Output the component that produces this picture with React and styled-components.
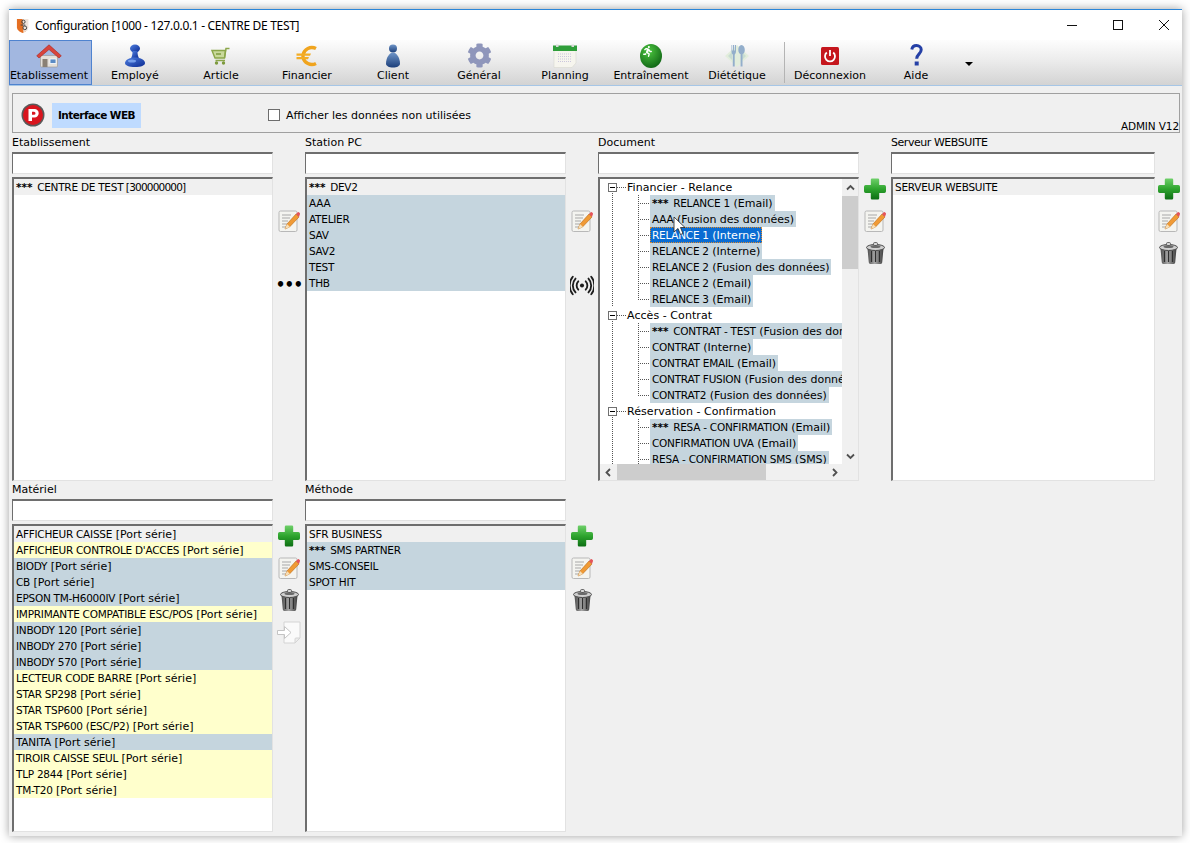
import React from "react";
import styled, { createGlobalStyle } from "styled-components";
import { FaCog, FaRunning } from "react-icons/fa";

const Global = createGlobalStyle`
  html, body { margin: 0; padding: 0; background: #fff; }
  body { font-family: "DejaVu Sans", sans-serif; font-size: 11px; color: #000; }
  * { box-sizing: border-box; }
`;

const Desktop = styled.div`
  width: 1190px; height: 843px; padding: 9px 8px 0 9px; overflow: hidden;
`;
const Window = styled.div`
  width: 1173px; height: 827px; display: flex; flex-direction: column;
  background: #f0f0f0; border-top: 1px solid #2b86d8;
  box-shadow: 0 0 9px rgba(0,0,0,.38);
`;
const TitleBar = styled.div`
  height: 30px; display: flex; align-items: center; background: #fff; padding-left: 7px; flex: none;
`;
const TitleText = styled.span`
  font-family: "Noto Sans", sans-serif; font-size: 12px; margin-left: 6px; letter-spacing: -.32px; flex: 1; white-space: nowrap;
`;
const WinBtn = styled.div`
  width: 46px; height: 30px; display: flex; align-items: center; justify-content: center;
  &:last-child { margin-right: -5px; }
`;
const Toolbar = styled.div`
  height: 46px; flex: none; display: flex; align-items: stretch;
  background: linear-gradient(#fdfdfd, #ececec 45%, #d3d3d3);
  border-bottom: 1px solid #a6c6e6;
`;
const ToolBtn = styled.div`
  width: ${p => p.$active ? 83 : 86}px; height: 45px; flex: none; display: flex; flex-direction: column; align-items: center;
  padding-top: 3px; white-space: nowrap; letter-spacing: .01px;
  ${p => p.$active && "background:#a2b7e0;border:1px solid #4f83cf;padding-top:2px;padding-right:3px;"}
`;
const ToolIcon = styled.div`
  height: 25px; display: flex; align-items: center; justify-content: center; flex: none;
`;
const ToolLabel = styled.div`
  line-height: 14px; margin-top: 1px;
`;
const ToolSep = styled.div`
  width: 1px; height: 41px; margin: 2px 2px 0 4px; background: #b4b4b4; flex: none;
`;
const MoreArrow = styled.div`
  width: 0; height: 0; margin: 22px 0 0 6px; border-left: 4px solid transparent; border-right: 4px solid transparent; border-top: 4px solid #000;
`;
const Main = styled.div`
  flex: 1; padding: 7px 0 0 3px; display: flex; flex-direction: column;
`;
const Panel = styled.div`
  width: 1168px; height: 40px; border: 1px solid #a0a0a0; display: flex; align-items: center; padding: 4px 0 0 8px; flex: none;
`;
const Badge = styled.div`
  width: 89px; height: 25px; margin-left: 7px; background: #bfdbff; font-weight: 700; display: flex; align-items: center; justify-content: center; font-size: 10.5px; letter-spacing: -.55px;
`;
const CheckBox = styled.div`
  width: 12px; height: 12px; margin-left: 127px; background: #fff; border: 1px solid #6d6d6d;
`;
const CheckLabel = styled.span`
  margin-left: 6px;
`;
const Version = styled.span`
  margin-left: auto; align-self: flex-end; font-size: 10.5px; line-height: 12px; letter-spacing: -.12px;
`;
const Section = styled.div`
  display: grid; grid-template-columns: 293px 293px 293px 291px; margin-top: ${p => p.$top}px;
`;
const Col = styled.div`
  display: flex; flex-direction: column;
`;
const Label = styled.div`
  height: 17px; line-height: 16px; letter-spacing: ${p => p.$tight ? "-.45px" : "0"};
`;
const SearchBox = styled.div`
  width: ${p => p.$w || 261}px; height: 22px; background: #fff; margin-bottom: 3px;
  border-style: solid; border-width: 2px 1px 1px 1px; border-color: #6e6e6e #e2e2e2 #e2e2e2 #6e6e6e;
`;
const ListRow = styled.div`
  display: flex; height: ${p => p.$h}px;
`;
const ListBox = styled.div`
  width: ${p => p.$w || 261}px; height: 100%; background: #fff; overflow: hidden; flex: none;
  border-style: solid; border-width: 2px 1px 1px 2px; border-color: #6e6e6e #e2e2e2 #e2e2e2 #6e6e6e;
`;
const Item = styled.div`
  height: 16px; line-height: 16px; padding-left: 2px; white-space: nowrap;
  background: ${p => ({ grey: "#f0f0f0", yellow: "#ffffcc", blue: "#c5d5de" }[p.$tone] || "transparent")};
`;
const Name = styled.span`
  font-size: 10.5px; letter-spacing: -.25px;
`;
const Detail = styled.span`
  font-size: 11px; letter-spacing: 0;
`;
const Code = styled.span`
  font-size: 10.5px; letter-spacing: -.8px;
`;
const Stars = styled.span`
  font-size: 10.5px; font-weight: 700; margin-right: 1px;
`;
const Gutter = styled.div`
  flex: 1; display: flex; flex-direction: column; align-items: center; margin-top: -4px;
`;
const Slot = styled.div`
  height: 32px; display: flex; align-items: center; justify-content: center;
`;
const Dots = styled.span`
  font-size: 15px; letter-spacing: -.8px; line-height: 16px; font-weight: 700;
`;
/* tree */
const TreeTop = styled.div`
  display: flex; height: 285px;
`;
const TreeView = styled.div`
  width: 242px; flex: none; overflow: hidden; position: relative;
`;
const dots = (dir) => `repeating-linear-gradient(${dir}, #555 0 1px, transparent 1px 2px)`;
const GroupRow = styled.div`
  height: 16px; display: flex; align-items: center; padding-left: 8px; white-space: nowrap;
  background: ${dots("to bottom")} 12px 12px / 1px 4px no-repeat;
`;
const Expander = styled.div`
  width: 9px; height: 9px; border: 1px solid #707070; background: #fff; display: flex; align-items: center; justify-content: center; flex: none;
  &::before { content: ""; width: 5px; height: 1px; background: #000; }
`;
const Connector = styled.div`
  width: 9px; height: 0; border-top: 1px dotted #555; flex: none; margin: 0 1px 0 0;
`;
const GroupName = styled.span`
  font-size: 11px; letter-spacing: .06px;
`;
const ChildRow = styled.div`
  height: 16px; padding-left: 50px; white-space: nowrap; display: flex; align-items: center;
  background:
    ${dots("to bottom")} 12px 0 / 1px 100% no-repeat,
    ${dots("to bottom")} 38px 0 / 1px ${p => p.$last ? "9px" : "100%"} no-repeat,
    ${dots("to right")} 38px 8px / 12px 1px no-repeat;
`;
const Node = styled.span`
  display: inline-block; height: 16px; line-height: 16px; padding: 0 2px 0 2px; flex: none;
  background: ${p => p.$sel ? "#0a6cd2" : "#c5d5de"}; color: ${p => p.$sel ? "#fff" : "#000"};
  ${p => p.$sel && "outline:1px dotted #e08a2c;outline-offset:-1px;"}
`;
const Pointer = styled.svg`
  position: absolute; left: 73px; top: 37px;
`;
const VBar = styled.div`
  width: 16px; flex: none; background: #f0f0f0; display: flex; flex-direction: column; align-items: center;
`;
const ArrowCell = styled.div`
  width: ${p => p.$w || 16}px; height: ${p => p.$h || 17}px; display: flex; align-items: center; justify-content: center; flex: none;
`;
const VThumb = styled.div`
  width: 16px; height: 73px; background: #cdcdcd; flex: none;
`;
const VSpace = styled.div`
  flex: 1;
`;
const HBar = styled.div`
  height: 16px; display: flex; background: #f0f0f0;
`;
const HThumb = styled.div`
  width: 149px; height: 16px; background: #cdcdcd; flex: none;
`;

const Chevron = ({ d }) => (
  <svg width="9" height="9" viewBox="0 0 9 9" fill="none" stroke="#505050" strokeWidth="1.8"><path d={d} /></svg>
);

/* ---------- drawings ---------- */
const Plus = () => (
  <svg width="24" height="24" viewBox="0 0 24 24">
    <defs><linearGradient id="plusG" x1="0" y1="0" x2="0" y2="1"><stop offset="0" stopColor="#6fd06a" /><stop offset=".5" stopColor="#2ea42e" /><stop offset="1" stopColor="#0d6e14" /></linearGradient></defs>
    <path d="M9 1.500h6a1.200 1.200 0 0 1 1.200 1.200V8h5.100A1.700 1.700 0 0 1 23 9.700v4.600a1.700 1.700 0 0 1-1.700 1.700h-5.100v5.300a1.200 1.200 0 0 1-1.200 1.200H9a1.200 1.200 0 0 1-1.200-1.200V16H2.700A1.700 1.700 0 0 1 1 14.300V9.700A1.700 1.700 0 0 1 2.700 8h5.100V2.700A1.200 1.200 0 0 1 9 1.500z" fill="url(#plusG)" />
  </svg>
);
const Edit = () => (
  <svg width="22" height="24" viewBox="0 0 22 24">
    <rect x="1" y="2" width="18" height="20.500" rx="1.500" fill="#f4f4f0" stroke="#b8b8b8" />
    <path d="M4 6h9M4 9h8M4 12h6M4 15h5M4 18h4" stroke="#a8a8a8" strokeWidth="1" />
    <path d="M7 20l2-5 9-10 3 3-9.500 10z" fill="#f09a35" stroke="#b96a16" strokeWidth=".6" />
    <path d="M7 20l2-5 3 3z" fill="#f6dfb8" />
    <path d="M18 5l1.500-1.600a1.200 1.200 0 0 1 1.700 0l.5.600a1.200 1.200 0 0 1 0 1.700L21 8z" fill="#e4545a" />
  </svg>
);
const Trash = () => (
  <svg width="21" height="24" viewBox="0 0 20 24">
    <defs><linearGradient id="trG" x1="0" y1="0" x2="1" y2="0"><stop offset="0" stopColor="#4e4e4e" /><stop offset=".45" stopColor="#a8a8a8" /><stop offset="1" stopColor="#3e3e3e" /></linearGradient></defs>
    <path d="M2 7.500h16l-1.300 14a2 2 0 0 1-2 1.500H5.300a2 2 0 0 1-2-1.500z" fill="url(#trG)" />
    <path d="M6 10v11M10 10v11M14 10v11" stroke="#2f2f2f" strokeWidth="1.200" />
    <ellipse cx="10" cy="6.500" rx="9" ry="3" fill="#cfcfcf" stroke="#4a4a4a" />
    <ellipse cx="10" cy="5.500" rx="5" ry="1.600" fill="#6a6a6a" />
    <rect x="8" y="1.500" width="4" height="3" rx="1.200" fill="#d8d8d8" stroke="#4a4a4a" strokeWidth=".8" />
  </svg>
);
const Import = () => (
  <svg width="26" height="25" viewBox="0 0 26 25">
    <path d="M8 2h16v16l-5 5H8z" fill="#fafafa" stroke="#d4d4d4" />
    <path d="M24 18h-4a1 1 0 0 0-1 1v4z" fill="#ececec" stroke="#d4d4d4" />
    <path d="M1.500 10.500h7v-4l6.500 6-6.500 6v-4h-7z" fill="#fff" stroke="#c4c4c4" />
  </svg>
);
const Signal = () => (
  <svg width="24" height="21" viewBox="0 0 26 22" fill="none" stroke="#1d1d1d" strokeWidth="2" strokeLinecap="round">
    <circle cx="13" cy="11" r="2.200" fill="#1d1d1d" stroke="none" />
    <path d="M9 6.500a6.500 6.500 0 0 0 0 9M17 6.500a6.500 6.500 0 0 1 0 9" />
    <path d="M6 3.500a11 11 0 0 0 0 15M20 3.500a11 11 0 0 1 0 15" />
    <path d="M3 1.500a15 15 0 0 0 0 19M23 1.500a15 15 0 0 1 0 19" />
  </svg>
);
const AppLogo = () => (
  <svg width="13" height="17" viewBox="0 0 14 17">
    <path d="M1 1.500h12v9c0 3-3 5-6 6-3-1-6-3-6-6z" fill="#e56f22" />
    <path d="M7 1.500h6v12L8 16z" fill="#f0f0ee" opacity=".9" />
    <circle cx="8" cy="4.500" r="1.800" fill="none" stroke="#3b3b3b" strokeWidth="1" />
    <circle cx="9.500" cy="11" r="2" fill="none" stroke="#3b3b3b" strokeWidth="1" />
    <path d="M5 8h5" stroke="#3b3b3b" />
  </svg>
);
const PLogo = () => (
  <svg width="24" height="24" viewBox="0 0 24 24">
    <circle cx="12" cy="12" r="11.500" fill="#5a5a5a" />
    <circle cx="12" cy="12" r="10" fill="#d9151e" />
    <path d="M7.500 6h6a4.200 4.200 0 0 1 0 8.400h-2.500V18H7.500zM11 8.700v3h2a1.500 1.500 0 0 0 0-3z" fill="#fff" fillRule="evenodd" />
  </svg>
);
const House = () => (
  <svg width="26" height="24" viewBox="0 0 26 24">
    <path d="M4.500 11.500h17V22a1 1 0 0 1-1 1h-15a1 1 0 0 1-1-1z" fill="#e4e0da" stroke="#9b948a" strokeWidth=".6" />
    <rect x="6.500" y="15" width="5" height="8" fill="#8a8074" />
    <rect x="14" y="15" width="6" height="4.500" fill="#5b8bc4" stroke="#fff" strokeWidth=".8" />
    <path d="M13 .8 25.300 11.800 23 14 13 5.500 3 14 .7 11.800z" fill="#d8443c" stroke="#a8261f" strokeWidth=".6" />
  </svg>
);
const Stamp = () => (
  <svg width="22" height="24" viewBox="0 0 22 24">
    <defs><linearGradient id="stG" x1="0" y1="0" x2="1" y2="1"><stop offset="0" stopColor="#4f7fe0" /><stop offset="1" stopColor="#0b2a92" /></linearGradient></defs>
    <ellipse cx="11" cy="4.500" rx="5" ry="4" fill="url(#stG)" />
    <path d="M8.500 7h5c0 4 .5 5 1.500 7.500H7c1-2.500 1.500-3.500 1.500-7.500z" fill="url(#stG)" />
    <path d="M1 19c0-3 4-5.500 10-5.500S21 16 21 19c0 2.500-4 4-10 4s-10-1.500-10-4z" fill="url(#stG)" />
    <ellipse cx="8" cy="17" rx="4" ry="1.500" fill="#86aef5" opacity=".8" />
  </svg>
);
const Cart = () => (
  <svg width="20" height="20" viewBox="0 0 20 20" fill="none">
    <path d="M1 4.500h13.500L13.500 12H4z" fill="#c9d99b" stroke="#8ba64a" strokeWidth="1.400" />
    <path d="M13.500 12 15 2.500h3.500M4.500 14.500h9.500" stroke="#8ba64a" strokeWidth="1.500" />
    <path d="M5 8h5" stroke="#7d9a3e" strokeWidth="1.500" />
    <circle cx="5.500" cy="17" r="1.700" fill="#7d9a3e" />
    <circle cx="12.500" cy="17" r="1.700" fill="#7d9a3e" />
  </svg>
);
const Euro = () => (
  <svg width="24" height="24" viewBox="0 0 24 24" fill="none">
    <path d="M21 4.500A9 9 0 0 0 8 11v2a9 9 0 0 0 13 6.500" stroke="#f0a41e" strokeWidth="3.400" />
    <path d="M1.500 9.500h14.500l-1 2.300H1.500zM1.500 13h12.500l-1 2.300H1.500z" fill="#f3ad27" />
  </svg>
);
const Person = () => (
  <svg width="16" height="24" viewBox="0 0 16 24">
    <defs><linearGradient id="peG" x1="0" y1="0" x2="0" y2="1"><stop offset="0" stopColor="#6f95c8" /><stop offset="1" stopColor="#1c3f7a" /></linearGradient></defs>
    <circle cx="8" cy="4.500" r="4" fill="url(#peG)" />
    <path d="M8 8.500c-4 0-7 6-7 11 0 2.500 3 4 7 4s7-1.500 7-4c0-5-3-11-7-11z" fill="url(#peG)" />
  </svg>
);
const Gear = () => <FaCog size={25} color="#8f96bb" />;
const Calendar = () => (
  <svg width="24" height="24" viewBox="0 0 24 24">
    <path d="M1 3h22v16l-4 4.500H1z" fill="#f6f5ee" stroke="#d8d8d0" strokeWidth=".6" />
    <path d="M0 1.500h24V7H0z" fill="#2f9e3a" />
    <rect x="3" y=".5" width="2.500" height="2.500" fill="#d9d9d9" />
    <rect x="18.500" y=".5" width="2.500" height="2.500" fill="#d9d9d9" />
    <path d="M5 10h14M5 12.500h14M5 15h14M5 17.500h14" stroke="#cbc6dd" strokeWidth="1" strokeDasharray="1 1" />
  </svg>
);
const Runner = () => (
  <svg width="22" height="24" viewBox="0 0 22 24">
    <defs><radialGradient id="ruG" cx=".4" cy=".3" r=".8"><stop offset="0" stopColor="#4cc63f" /><stop offset="1" stopColor="#0b5d12" /></radialGradient></defs>
    <ellipse cx="11" cy="12" rx="11" ry="12" fill="url(#ruG)" />
    <FaRunning x="2" y="2" width="18" height="20" color="#fff" />
  </svg>
);
const Cutlery = () => (
  <svg width="24" height="24" viewBox="0 0 24 24">
    <path d="M12 1 24 12 12 23 0 12z" fill="#e2eddc" />
    <path d="M3 12 7 8v8zM21 12l-4-4v8z" fill="#c9ddd2" />
    <path d="M6.500 1v6.500c0 2 1.300 2.500 1.300 3.500v11.500h1.900V11c0-1 1.300-1.500 1.300-3.500V1h-1v5.500h-.8V1h-1.400v5.500h-.8V1z" fill="#93aecb" />
    <path d="M16.500 1c-2 0-3.200 2.300-3.200 5s1.400 3.700 2.300 4.200V22.500h1.900V10.200c.9-.5 2.300-1.500 2.300-4.200S18.500 1 16.500 1z" fill="#93aecb" />
  </svg>
);
const Power = () => (
  <svg width="18" height="18" viewBox="0 0 18 18" fill="none">
    <rect width="18" height="18" rx="1.500" fill="#c5161d" />
    <path d="M5.800 5.500a5 5 0 1 0 6.400 0" stroke="#fff" strokeWidth="1.800" />
    <path d="M9 3v6" stroke="#fff" strokeWidth="1.800" />
  </svg>
);
const Question = () => (
  <svg width="13" height="24" viewBox="0 0 13 24" fill="none">
    <path d="M1.800 5.500C2.200 3 4 1.600 6.500 1.600c2.800 0 4.700 1.700 4.700 4.200 0 4-4.400 4.200-4.500 9" stroke="#2540a6" strokeWidth="3" />
    <rect x="4.700" y="17.500" width="4" height="4" fill="#2540a6" />
  </svg>
);
const Cursor = () => (
  <Pointer width="13" height="20" viewBox="0 0 13 20">
    <path d="M1 1v15l4-3.500 2.500 6 2.500-1-2.500-6H12z" fill="#fff" stroke="#222" strokeWidth=".8" />
  </Pointer>
);

/* ---------- data ---------- */
const tools = [
  ["Etablissement", <House />, true], ["Employé", <Stamp />], ["Article", <Cart />], ["Financier", <Euro />],
  ["Client", <Person />], ["Général", <Gear />], ["Planning", <Calendar />], ["Entraînement", <Runner />], ["Diététique", <Cutlery />],
];

const B = "blue", Y = "yellow", G = "grey";
const materiel = [
  ["AFFICHEUR CAISSE", "[Port série]", G], ["AFFICHEUR CONTROLE D'ACCES", "[Port série]", Y], ["BIODY", "[Port série]", B],
  ["CB", "[Port série]", B], ["EPSON TM-H6000IV", "[Port série]", B], ["IMPRIMANTE COMPATIBLE ESC/POS", "[Port série]", Y],
  ["INBODY 120", "[Port série]", B], ["INBODY 270", "[Port série]", B], ["INBODY 570", "[Port série]", B],
  ["LECTEUR CODE BARRE", "[Port série]", Y], ["STAR SP298", "[Port série]", Y], ["STAR TSP600", "[Port série]", Y],
  ["STAR TSP600 (ESC/P2)", "[Port série]", Y], ["TANITA", "[Port série]", B], ["TIROIR CAISSE SEUL", "[Port série]", Y],
  ["TLP 2844", "[Port série]", Y], ["TM-T20", "[Port série]", Y],
];
const stations = [["DEV2", "", G, true], ["AAA", "", B], ["ATELIER", "", B], ["SAV", "", B], ["SAV2", "", B], ["TEST", "", B], ["THB", "", B]];
const methodes = [["SFR BUSINESS", "", G], ["SMS PARTNER", "", B, true], ["SMS-CONSEIL", "", B], ["SPOT HIT", "", B]];
const tree = [
  ["Financier - Relance", [
    ["RELANCE 1", "(Email)", true], ["AAA", "(Fusion des données)"], ["RELANCE 1", "(Interne)", false, true], ["RELANCE 2", "(Interne)"],
    ["RELANCE 2", "(Fusion des données)"], ["RELANCE 2", "(Email)"], ["RELANCE 3", "(Email)"],
  ]],
  ["Accès - Contrat", [
    ["CONTRAT - TEST", "(Fusion des données)", true], ["CONTRAT", "(Interne)"], ["CONTRAT EMAIL", "(Email)"],
    ["CONTRAT FUSION", "(Fusion des données)"], ["CONTRAT2", "(Fusion des données)"],
  ]],
  ["Réservation - Confirmation", [
    ["RESA - CONFIRMATION", "(Email)", true], ["CONFIRMATION UVA", "(Email)"], ["RESA - CONFIRMATION SMS", "(SMS)"],
  ]],
];

const Text = ({ name, detail, star }) => (
  <>
    {star && <Stars>*** </Stars>}
    <Name>{name}</Name>
    {detail && <Detail> {detail}</Detail>}
  </>
);
const List = ({ items, w }) => (
  <ListBox $w={w}>
    {items.map(([n, d, t, s]) => <Item key={n + d} $tone={t}><Text name={n} detail={d} star={s} /></Item>)}
  </ListBox>
);

const App = () => (
  <Desktop>
    <Global />
    <Window>
      <TitleBar>
        <AppLogo />
        <TitleText>Configuration [1000 - 127.0.0.1 - CENTRE DE TEST]</TitleText>
        <WinBtn><svg width="10" height="10" viewBox="0 0 10 10"><path d="M0 5.500h10" stroke="#111" /></svg></WinBtn>
        <WinBtn><svg width="10" height="10" viewBox="0 0 10 10"><rect x=".5" y=".5" width="9" height="9" fill="none" stroke="#111" /></svg></WinBtn>
        <WinBtn><svg width="10" height="10" viewBox="0 0 10 10"><path d="M0 0l10 10M10 0 0 10" stroke="#111" /></svg></WinBtn>
      </TitleBar>
      <Toolbar>
        {tools.map(([label, icon, active]) => (
          <ToolBtn key={label} $active={active}><ToolIcon>{icon}</ToolIcon><ToolLabel>{label}</ToolLabel></ToolBtn>
        ))}
        <ToolSep />
        <ToolBtn><ToolIcon><Power /></ToolIcon><ToolLabel>Déconnexion</ToolLabel></ToolBtn>
        <ToolBtn><ToolIcon><Question /></ToolIcon><ToolLabel>Aide</ToolLabel></ToolBtn>
        <MoreArrow />
      </Toolbar>
      <Main>
        <Panel>
          <PLogo />
          <Badge>Interface WEB</Badge>
          <CheckBox />
          <CheckLabel>Afficher les données non utilisées</CheckLabel>
          <Version>ADMIN V12</Version>
        </Panel>
        <Section $top={2}>
          <Col>
            <Label>Etablissement</Label>
            <SearchBox />
            <ListRow $h={304}>
              <ListBox><Item $tone={G}><Stars>*** </Stars><Name>CENTRE DE TEST</Name><Code> [300000000]</Code></Item></ListBox>
              <Gutter><Slot /><Slot><Edit /></Slot><Slot /><Slot><Dots>•••</Dots></Slot></Gutter>
            </ListRow>
          </Col>
          <Col>
            <Label>Station PC</Label>
            <SearchBox />
            <ListRow $h={304}>
              <List items={stations} />
              <Gutter><Slot /><Slot><Edit /></Slot><Slot /><Slot><Signal /></Slot></Gutter>
            </ListRow>
          </Col>
          <Col>
            <Label>Document</Label>
            <SearchBox />
            <ListRow $h={304}>
              <ListBox>
                <TreeTop>
                  <TreeView>
                    {tree.map(([group, kids], gi) => (
                      <div key={group}>
                        <GroupRow>
                          <Expander /><Connector /><GroupName>{group}</GroupName>
                        </GroupRow>
                        {kids.map(([n, d, s, sel], i) => (
                          <ChildRow key={n + d} $last={i === kids.length - 1 && gi < 2}>
                            <Node $sel={sel}><Text name={n} detail={d} star={s} /></Node>
                          </ChildRow>
                        ))}
                      </div>
                    ))}
                    <Cursor />
                  </TreeView>
                  <VBar>
                    <ArrowCell><Chevron d="M1 6.500 4.500 3 8 6.500" /></ArrowCell>
                    <VThumb />
                    <VSpace />
                    <ArrowCell $h={16}><Chevron d="M1 2.500 4.500 6 8 2.500" /></ArrowCell>
                  </VBar>
                </TreeTop>
                <HBar>
                  <ArrowCell $w={17} $h={16}><Chevron d="M6 1 2.500 4.500 6 8" /></ArrowCell>
                  <HThumb />
                  <VSpace />
                  <ArrowCell $w={16} $h={16}><Chevron d="M3 1 6.500 4.500 3 8" /></ArrowCell>
                  <ArrowCell $w={16} $h={16} />
                </HBar>
              </ListBox>
              <Gutter><Slot><Plus /></Slot><Slot><Edit /></Slot><Slot><Trash /></Slot></Gutter>
            </ListRow>
          </Col>
          <Col>
            <Label $tight>Serveur WEBSUITE</Label>
            <SearchBox $w={264} />
            <ListRow $h={304}>
              <ListBox $w={264}><Item $tone={G}><Name>SERVEUR WEBSUITE</Name></Item></ListBox>
              <Gutter><Slot><Plus /></Slot><Slot><Edit /></Slot><Slot><Trash /></Slot></Gutter>
            </ListRow>
          </Col>
        </Section>
        <Section $top={1}>
          <Col>
            <Label>Matériel</Label>
            <SearchBox />
            <ListRow $h={308}>
              <List items={materiel} />
              <Gutter><Slot><Plus /></Slot><Slot><Edit /></Slot><Slot><Trash /></Slot><Slot><Import /></Slot></Gutter>
            </ListRow>
          </Col>
          <Col>
            <Label>Méthode</Label>
            <SearchBox />
            <ListRow $h={308}>
              <List items={methodes} />
              <Gutter><Slot><Plus /></Slot><Slot><Edit /></Slot><Slot><Trash /></Slot></Gutter>
            </ListRow>
          </Col>
        </Section>
      </Main>
    </Window>
  </Desktop>
);

export default App;
